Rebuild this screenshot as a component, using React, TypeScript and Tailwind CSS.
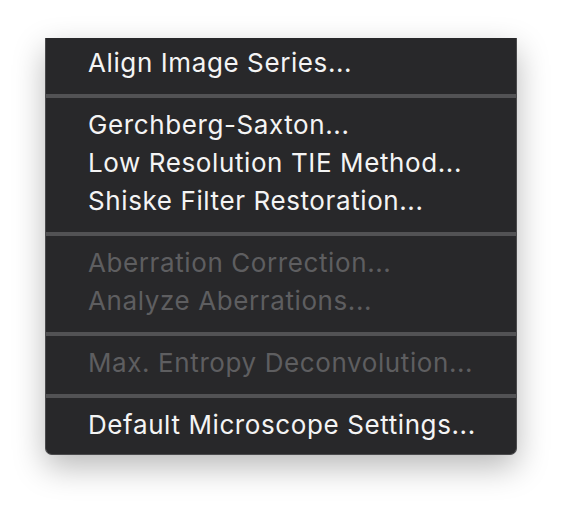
import * as React from 'react';

type Item = { label: string; disabled?: boolean };

const sections: Item[][] = [
  [{ label: 'Align Image Series...' }],
  [
    { label: 'Gerchberg-Saxton...' },
    { label: 'Low Resolution TIE Method...' },
    { label: 'Shiske Filter Restoration...' },
  ],
  [
    { label: 'Aberration Correction...', disabled: true },
    { label: 'Analyze Aberrations...', disabled: true },
  ],
  [{ label: 'Max. Entropy Deconvolution...', disabled: true }],
  [{ label: 'Default Microscope Settings...' }],
];

export default function App() {
  return (
    <div className="w-[562px] h-[508px] bg-white overflow-hidden pt-[38px] pl-[45px]">
      {/* menu */}
      <div
        className="w-[472px] bg-[#28282a] border-x-[1.5px] border-b-[1.5px] border-[#4b4b4d] rounded-b-[7px] shadow-[0_12px_32px_rgba(0,0,0,0.28)] pt-[6px] pb-[10px]"
        style={{ fontFamily: 'Inter, "Noto Sans", sans-serif' }}
      >
        {sections.map((items, i) => (
          <div key={i}>
            {i > 0 && <div className="h-[4px] bg-[#525254] mt-[12px] mb-[8px]" />}
            {items.map(item => (
              <div
                key={item.label}
                className={`h-[38px] leading-[38px] pl-[42px] text-[26px] tracking-[0.6px] whitespace-nowrap ${
                  item.disabled ? 'text-[#5e5e60]' : 'text-[#f4f4f4]'
                }`}
              >
                {item.label}
              </div>
            ))}
          </div>
        ))}
      </div>
    </div>
  );
}
